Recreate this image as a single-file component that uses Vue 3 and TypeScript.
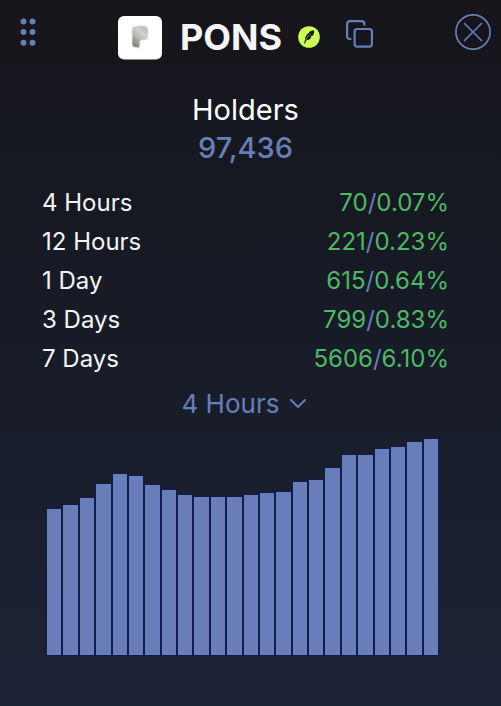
<script setup lang="ts">
import { ref } from 'vue'

interface Change {
  period: string
  count: number
  percent: string
}

const changes: Change[] = [
  { period: '4 Hours', count: 70, percent: '0.07%' },
  { period: '12 Hours', count: 221, percent: '0.23%' },
  { period: '1 Day', count: 615, percent: '0.64%' },
  { period: '3 Days', count: 799, percent: '0.83%' },
  { period: '7 Days', count: 5606, percent: '6.10%' },
]

const interval = ref<string>('4 Hours')

const bars: number[] = [
  148, 152, 159, 173, 183, 181, 172, 167, 162, 160, 160, 160,
  162, 164, 165, 175, 177, 189, 202, 202, 208, 210, 215, 218,
]
const peak = Math.max(...bars)
</script>

<template>
  <main class="panel">
    <header class="bar">
      <button class="icon-button" type="button" aria-label="Move panel">
        <svg class="grip" width="16" height="30" viewBox="0 0 16 30" fill="currentColor">
          <circle cx="3.5" cy="4.4" r="3" /><circle cx="12.5" cy="4.4" r="3" />
          <circle cx="3.5" cy="15.1" r="3" /><circle cx="12.5" cy="15.1" r="3" />
          <circle cx="3.5" cy="25.8" r="3" /><circle cx="12.5" cy="25.8" r="3" />
        </svg>
      </button>
      <div class="token">
        <svg class="logo" width="44" height="44" viewBox="0 0 44 44" aria-hidden="true">
          <defs>
            <linearGradient id="metal" x1="0.9" y1="0" x2="0.2" y2="1">
              <stop offset="0" stop-color="#b4bab3" />
              <stop offset="0.35" stop-color="#ccd1cb" />
              <stop offset="0.65" stop-color="#adb3ac" />
              <stop offset="1" stop-color="#737a72" />
            </linearGradient>
          </defs>
          <rect width="44" height="43.4" rx="6" fill="#fff" />
          <path
            d="M14 14Q14 10 18 10H26Q30 10 30 15V20Q30 24 26 24Q22 23 22 27V29Q22 32 20 32L16 31Q14 31 14 28Z"
            fill="url(#metal)" stroke="#dfe3df" stroke-width="1"
          />
        </svg>
        <h1 class="name">PONS</h1>
        <svg class="chain" width="22" height="22" viewBox="0 0 22 22" aria-hidden="true">
          <circle cx="11" cy="11" r="10.8" fill="#cf5" />
          <path d="M7 14Q6.6 11 9 8.5L12 5.5Q14 4.2 16.2 4.8Q16.4 7.5 15 9.5L12.3 10.5L13.3 11.5Q11.5 14 8.5 14.2L6.8 17.5H6Z" fill="#10150a" />
          <path d="M7.6 14Q9.5 10.5 12.5 8" fill="none" stroke="#cf5" stroke-width="0.6" />
        </svg>
        <button class="icon-button" type="button" aria-label="Copy address">
          <svg
            class="copy" width="27" height="28" viewBox="0 0 27 28" fill="none"
            stroke="currentColor" stroke-width="2.2" stroke-linecap="round"
          >
            <rect x="8.6" y="9" width="17.3" height="17.6" rx="2.6" />
            <path d="M4.6 19H4Q1.1 19 1.1 16V4Q1.1 1.2 4 1.2H15.6Q18.4 1.2 18.4 4V4.8" />
          </svg>
        </button>
      </div>
      <button class="icon-button" type="button" aria-label="Close">
        <svg
          width="36" height="36" viewBox="0 0 36 36" fill="none"
          stroke="currentColor" stroke-width="1.7" stroke-linecap="round"
        >
          <circle cx="18" cy="18" r="17.1" />
          <path d="M9.5 9.5L26.5 26.5M26.5 9.5L9.5 26.5" />
        </svg>
      </button>
    </header>

    <section class="content">
      <h2 class="label">Holders</h2>
      <p class="total">97,436</p>

      <dl class="changes">
        <div v-for="item in changes" :key="item.period" class="row">
          <dt>{{ item.period }}</dt>
          <dd>{{ item.count }}<span class="slash">/</span>{{ item.percent }}</dd>
        </div>
      </dl>

      <div class="picker">
        <select v-model="interval" class="select" aria-label="Chart interval">
          <option v-for="item in changes" :key="item.period">{{ item.period }}</option>
        </select>
        <svg
          class="chevron" width="16" height="10" viewBox="0 0 16 10" fill="none"
          stroke="currentColor" stroke-width="2" stroke-linecap="round" stroke-linejoin="round"
        >
          <path d="M1 1L8 8L15 1" />
        </svg>
      </div>

      <div class="chart" role="img" aria-label="Holders over time">
        <div
          v-for="(value, index) in bars" :key="index" class="column"
          :style="{ height: `${(value / peak) * 100}%` }"
        ></div>
      </div>
    </section>
  </main>
</template>

<style>
body {
  background: #1b2336;
}
</style>

<style scoped>
.panel {
  box-sizing: border-box;
  min-height: 100vh;
  padding: 14px 10px 50px 20px;
  background: linear-gradient(#15151a, #1b2336);
  color: #fff;
  font-family: Inter, "Liberation Sans", sans-serif;
}

.bar {
  display: flex;
  align-items: flex-start;
  justify-content: space-between;
}

.icon-button {
  display: flex;
  padding: 0;
  border: 0;
  background: none;
  color: #677eb8;
  cursor: pointer;
}

.grip {
  margin-top: 3px;
}

.token {
  display: flex;
  align-items: center;
}

.logo {
  margin: 2px 18px 0 0;
}

.name {
  margin: 0;
  color: #f5f5f5;
  font-size: 36px;
  font-weight: 700;
  line-height: 46px;
}

.chain {
  margin: 0 26px 0 16px;
}

.copy {
  margin-bottom: 6px;
}

.content {
  padding: 0 42px 0 22px;
}

.label,
.total {
  margin: 0;
  font-size: 29px;
  line-height: 38px;
  text-align: center;
}

.label {
  margin-top: 31px;
  font-weight: 400;
}

.total {
  color: #677eb8;
  font-weight: 500;
}

.changes {
  margin: 16px 0 0;
}

.row {
  display: flex;
  justify-content: space-between;
  color: #f5f5f5;
  font-size: 24px;
  line-height: 39px;
}

.row dd {
  margin: 0;
  color: #4cb963;
}

.slash {
  color: #677eb8;
}

.picker {
  display: grid;
  align-items: center;
  justify-content: center;
  margin-top: 8px;
  padding-right: 4px;
  color: #677eb8;
}

.select {
  grid-area: 1 / 1;
  width: 124px;
  height: 36px;
  padding: 0;
  border: 0;
  appearance: none;
  background: none;
  color: inherit;
  font: 400 26px/36px Inter, "Liberation Sans", sans-serif;
  cursor: pointer;
}

.chevron {
  grid-area: 1 / 1;
  justify-self: end;
  pointer-events: none;
}

.chart {
  display: flex;
  align-items: flex-end;
  height: 218px;
  margin: 16px 10px 0 4px;
}

.column {
  box-sizing: border-box;
  flex: 1;
  border: 1px solid #101c4e;
  background: #677eb8;
}
</style>
